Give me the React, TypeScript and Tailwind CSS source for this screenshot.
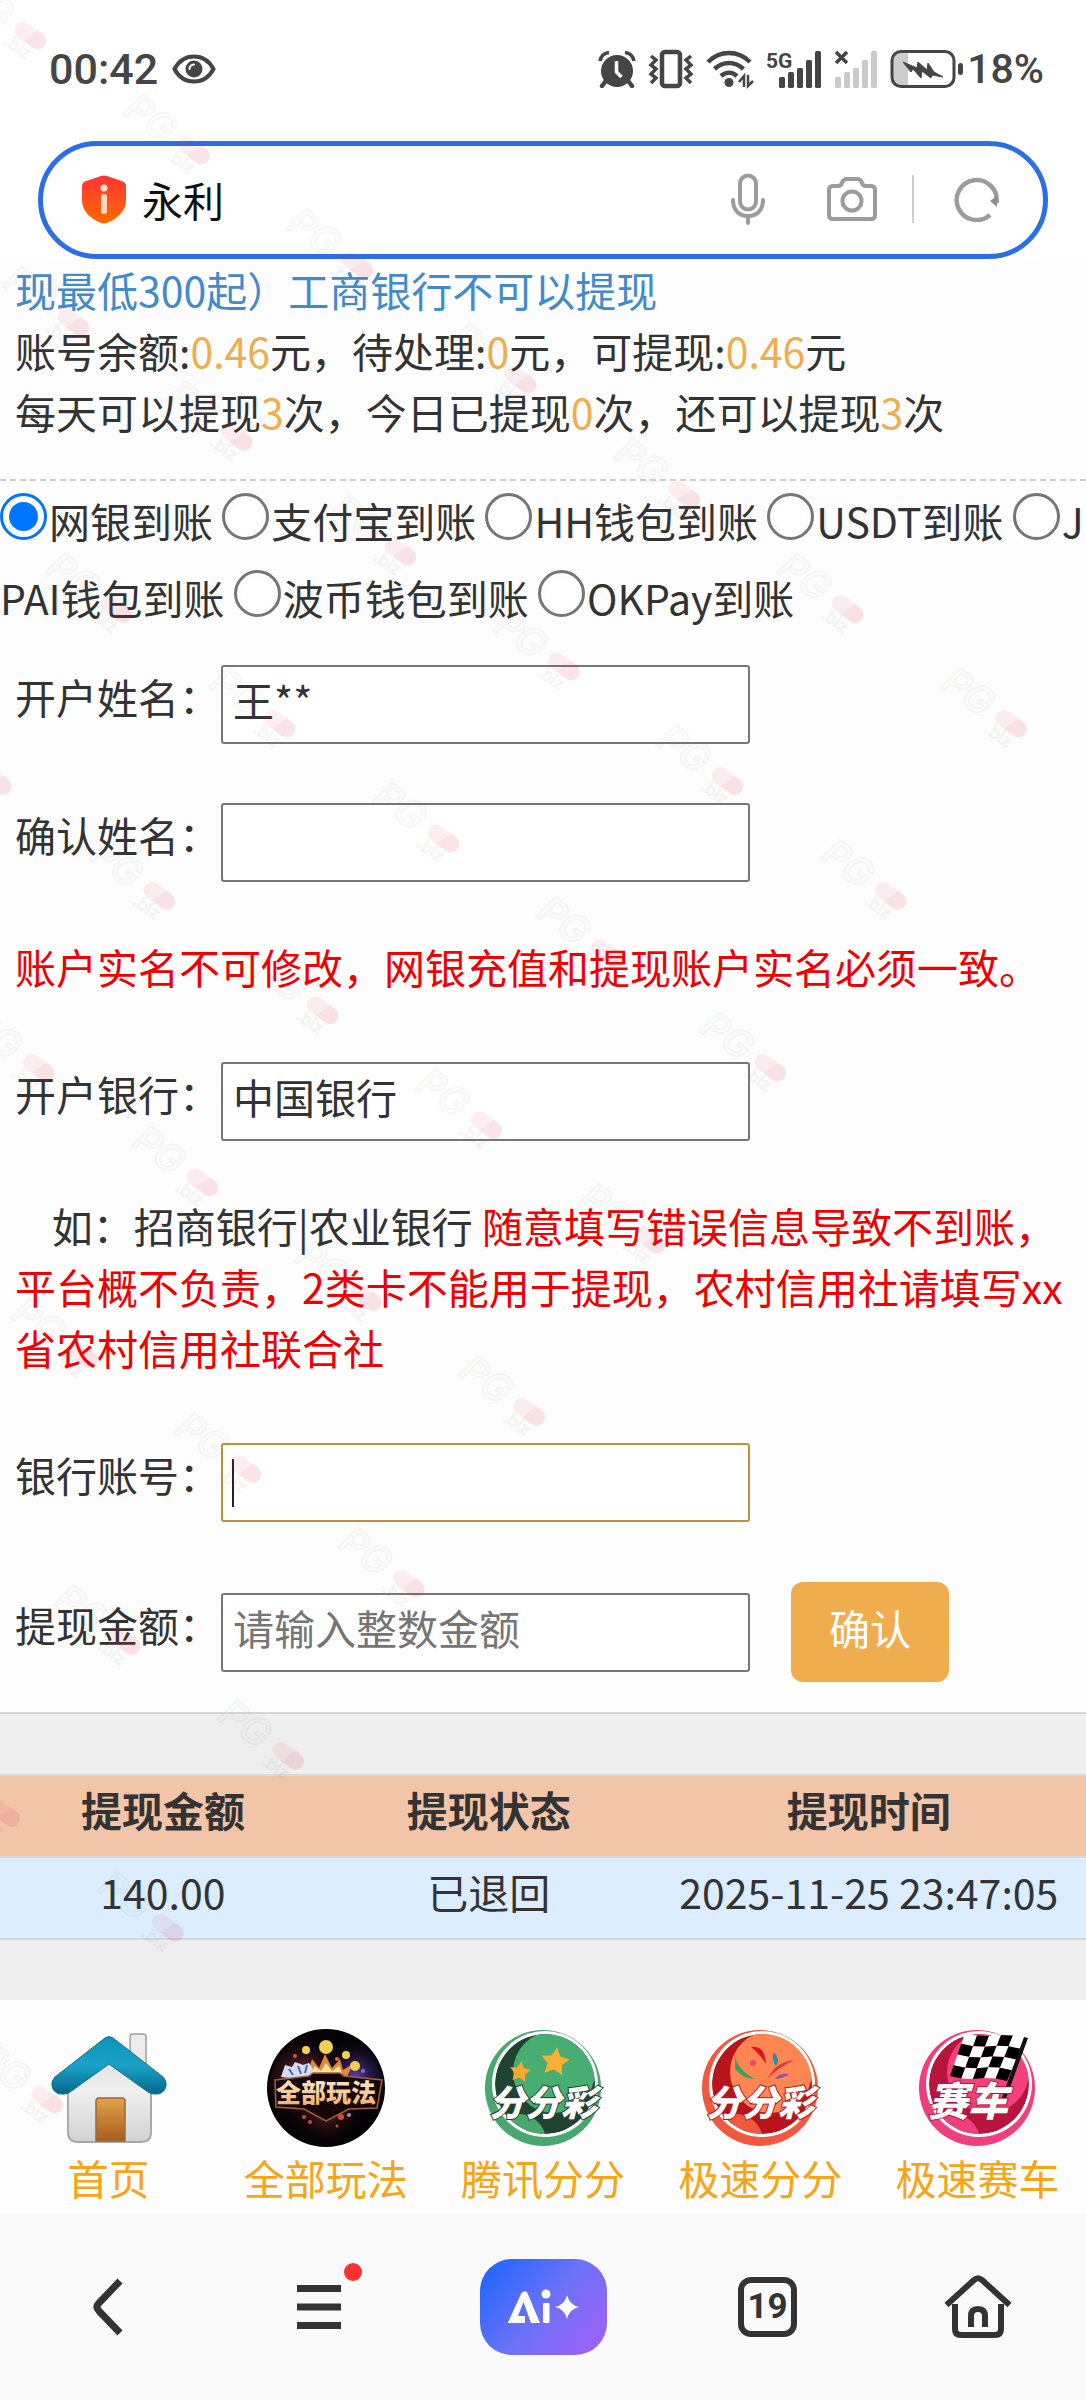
import React from "react";

const ORANGE = "text-[#f0ad4e]";

/* ---------- status bar icons ---------- */

function EyeIcon() {
  return (
    <svg width="44" height="32" viewBox="0 0 44 32" fill="none" aria-hidden="true">
      <path d="M2.500 16C7 7.500 14 3.500 22 3.500S37 7.500 41.500 16C37 24.500 30 28.500 22 28.500S7 24.500 2.500 16Z" stroke="#454545" strokeWidth="4" />
      <circle cx="22" cy="16" r="8.500" fill="#454545" />
      <path d="M17.500 16a4.500 4.500 0 0 1 4.500-4.500" stroke="#fff" strokeWidth="2" strokeLinecap="round" />
    </svg>
  );
}

function AlarmIcon() {
  return (
    <svg width="38" height="38" viewBox="0 0 38 38" fill="none" aria-hidden="true">
      <circle cx="19" cy="21" r="16" fill="#454545" />
      <path d="M2 11C3 6 6 3 11 2.500M36 11C35 6 32 3 27 2.500" stroke="#454545" strokeWidth="3.500" />
      <path d="M7 32l-3 4M31 32l3 4" stroke="#454545" strokeWidth="4.500" strokeLinecap="round" />
      <path d="M18.500 11v11l5 5" stroke="#fff" strokeWidth="3.500" />
    </svg>
  );
}

function VibrateIcon() {
  return (
    <svg width="46" height="40" viewBox="0 0 46 40" fill="none" stroke="#454545" aria-hidden="true">
      <rect x="14" y="3" width="18" height="34" rx="3" strokeWidth="4.500" />
      <path d="M3 7l5 4-5 5 5 4-5 5 5 4-5 5M43 7l-5 4 5 5-5 4 5 5-5 4 5 5" strokeWidth="3.500" />
    </svg>
  );
}

function WifiIcon() {
  return (
    <svg width="48" height="40" viewBox="0 0 48 40" fill="none" stroke="#454545" aria-hidden="true">
      <path d="M2 13C14 1 32 1 44 13" strokeWidth="4.500" />
      <path d="M8.500 20C17 12 29 12 37.500 20" strokeWidth="4.500" />
      <path d="M15 27c5-4.500 11-4.500 16 0" strokeWidth="4.500" />
      <circle cx="23" cy="33.500" r="4.500" fill="#454545" stroke="none" />
      <path d="M38 38V27l-5 6M42 26v11l5-5" strokeWidth="2.500" />
    </svg>
  );
}

function Bars({ x, color }: { x: number; color: string }) {
  return (
    <g fill={color}>
      {[11, 16, 20, 28, 37].map((h, i) => (
        <rect key={i} x={x + i * 9} y={39 - h} width="6" height={h} rx="1.500" />
      ))}
    </g>
  );
}

function SignalIcon() {
  return (
    <svg width="56" height="40" viewBox="0 0 56 40" aria-label="5G">
      <text x="0" y="19" fontFamily="Roboto, sans-serif" fontWeight="700" fontSize="21" fill="#454545">5G</text>
      <Bars x={13} color="#454545" />
    </svg>
  );
}

function NoSignalIcon() {
  return (
    <svg width="44" height="40" viewBox="0 0 44 40" fill="none" aria-hidden="true">
      <path d="M2 3l11 11M13 3L2 14" stroke="#454545" strokeWidth="3.500" />
      <Bars x={1} color="#cacaca" />
    </svg>
  );
}

function BatteryIcon() {
  return (
    <svg width="74" height="40" viewBox="0 0 74 40" fill="none" aria-hidden="true">
      <path d="M12 3h6v34h-6c-6 0-9-3-9-9V12c0-6 3-9 9-9Z" fill="#cdcdcd" />
      <rect x="2" y="2.500" width="62" height="35" rx="9" stroke="#454545" strokeWidth="3" />
      <rect x="68" y="14" width="5" height="12" rx="2.500" fill="#454545" />
      <path d="M13 13l14 6 1-6 9 8 1-7 6 9 9 5-11-2-1 3-9-7-1 7-8-9-2 3Z" fill="#454545" stroke="#454545" strokeWidth="1" />
    </svg>
  );
}

/* ---------- address bar icons ---------- */

function ShieldIcon() {
  return (
    <svg width="46" height="50" viewBox="0 0 46 50" aria-hidden="true">
      <defs>
        <linearGradient id="shield" x1="0" y1="0" x2="0" y2="1">
          <stop offset="0" stopColor="#ff3434" />
          <stop offset="1" stopColor="#ff6a00" />
        </linearGradient>
      </defs>
      <path d="M20 2q3-1 6 0l16 5.500q3 1.500 3 4.500v14c0 11-8 18-18 22.500q-4 2-8 0C9 44 1 37 1 26V12q0-3 3-4.500Z" fill="url(#shield)" />
      <circle cx="23" cy="14" r="3.500" fill="#ffe3d6" />
      <rect x="20" y="20" width="6" height="20" rx="2.500" fill="#ffd9c2" />
    </svg>
  );
}

function MicIcon() {
  return (
    <svg width="34" height="52" viewBox="0 0 34 52" fill="none" stroke="#9c9c9c" strokeWidth="4" strokeLinecap="round" aria-hidden="true">
      <rect x="9" y="2.500" width="16" height="34" rx="8" />
      <path d="M2 27c0 10 6 16 15 16s15-6 15-16M17 43v7" />
    </svg>
  );
}

function CameraIcon() {
  return (
    <svg width="50" height="44" viewBox="0 0 50 44" fill="none" stroke="#9c9c9c" strokeWidth="4" strokeLinejoin="round" aria-hidden="true">
      <path d="M6 9h5q3 0 4-3 1-4 5-4h10q4 0 5 4 1 3 4 3h5q4 0 4 4v25q0 4-4 4H6q-4 0-4-4V13q0-4 4-4Z" />
      <circle cx="25" cy="24" r="9.500" />
    </svg>
  );
}

function ReloadIcon() {
  return (
    <svg width="46" height="46" viewBox="0 0 46 46" fill="none" aria-hidden="true">
      <path d="M36 39A20 20 0 1 1 42.500 27" stroke="#9c9c9c" strokeWidth="4.500" />
      <path d="M36 25l7-5v11Z" fill="#8c8c8c" />
    </svg>
  );
}

/* ---------- lottery shortcuts ---------- */

function HouseArt() {
  return (
    <svg width="118" height="118" viewBox="0 0 118 118" aria-hidden="true">
      <defs>
        <linearGradient id="roof" x1="0" y1="0" x2="0" y2="1">
          <stop offset="0" stopColor="#0e93b8" />
          <stop offset=".5" stopColor="#1ba2c8" />
          <stop offset="1" stopColor="#04688a" />
        </linearGradient>
        <linearGradient id="wall" x1="0" y1="0" x2="0" y2="1">
          <stop offset="0" stopColor="#dedede" />
          <stop offset=".4" stopColor="#f0f0f0" />
          <stop offset="1" stopColor="#d2d2d2" />
        </linearGradient>
        <linearGradient id="door" x1="0" y1="0" x2="0" y2="1">
          <stop offset="0" stopColor="#e3a24c" />
          <stop offset="1" stopColor="#a75c1e" />
        </linearGradient>
      </defs>
      <path d="M80 36V8q0-3 3-3h10q3 0 3 3v40Z" fill="#ececec" stroke="#9f9f9f" strokeWidth="1.500" />
      <path d="M18 58L59 28l42 30v45q0 10-10 10H28q-10 0-10-10Z" fill="url(#wall)" stroke="#a9a9a9" strokeWidth="2" />
      <path d="M46 112V72q0-3 3-3h23q3 0 3 3v40Z" fill="url(#door)" stroke="#9b6a38" strokeWidth="1.500" />
      <path d="M55 9q4-3 8 0l50 39q4 4 3 9-2 9-12 8-3 0-6-2L59 35 20 63q-3 2-6 2Q4 66 2 57q-1-5 3-9Z" fill="url(#roof)" stroke="#0b6f8d" strokeWidth="1" />
    </svg>
  );
}

function AllGamesArt() {
  return (
    <svg width="118" height="118" viewBox="0 0 118 118" aria-hidden="true">
      <defs>
        <radialGradient id="glowL" cx=".3" cy=".42" r=".42">
          <stop offset="0" stopColor="#a23a4c" />
          <stop offset="1" stopColor="#000" stopOpacity="0" />
        </radialGradient>
        <radialGradient id="glowR" cx=".76" cy=".4" r=".36">
          <stop offset="0" stopColor="#5a41a8" />
          <stop offset="1" stopColor="#000" stopOpacity="0" />
        </radialGradient>
        <radialGradient id="glowB" cx=".5" cy=".68" r=".34">
          <stop offset="0" stopColor="#7a2a2c" />
          <stop offset="1" stopColor="#000" stopOpacity="0" />
        </radialGradient>
        <linearGradient id="gold" x1="0" y1="0" x2="0" y2="1">
          <stop offset="0" stopColor="#fff6dc" />
          <stop offset="1" stopColor="#f0a862" />
        </linearGradient>
      </defs>
      <circle cx="59" cy="59" r="59" fill="#050205" />
      <circle cx="59" cy="59" r="57" fill="url(#glowB)" />
      <circle cx="59" cy="59" r="57" fill="url(#glowL)" />
      <circle cx="59" cy="59" r="57" fill="url(#glowR)" />
      <path d="M38 46l-6-12 10 6 3-10 7 9 6-14 7 14 8-9 3 11 10-6-6 13Z" fill="#d98a3c" />
      <path d="M44 44l4-7 6 5 5-8 6 8 7-5 3 7Z" fill="#ffe39a" />
      <path d="M14 48l4-12 7 2 3-5 8 3 6-2 4 6-4 8-12 2Z" fill="#d6dcf3" />
      <path d="M22 40l4 6M31 37l3 8M40 36l-2 8" stroke="#4b6aa8" strokeWidth="2" />
      <g fill="#f5cf55">
        <circle cx="59" cy="18" r="7" />
        <circle cx="39" cy="21" r="4" />
        <circle cx="79" cy="26" r="4" />
        <circle cx="88" cy="37" r="5" />
        <circle cx="28" cy="27" r="2" fill="#d45a34" />
        <circle cx="70" cy="30" r="2" fill="#f06a3c" />
        <circle cx="96" cy="42" r="2" fill="#8c6ae0" />
      </g>
      <path d="M8 51l34-4 4-3h27l4 3 38 4-5 28-28 1-23 12-22-12-28-2Z" fill="#140608" stroke="#a0603c" strokeWidth="1.500" />
      <g fill="#c2503c">
        <circle cx="37" cy="88" r="2" />
        <circle cx="43" cy="93" r="2" />
        <circle cx="74" cy="88" r="3" />
        <circle cx="82" cy="86" r="2" fill="#d6789c" />
        <circle cx="70" cy="97" r="1.500" />
      </g>
      <text x="59" y="73" textAnchor="middle" fontFamily="'Noto Sans CJK SC', sans-serif" fontWeight="900" fontSize="25" fill="url(#gold)">全部玩法</text>
    </svg>
  );
}

function starPoints(cx: number, cy: number, r: number, turn: number) {
  return Array.from({ length: 10 }, (_, i) => {
    const a = ((i * 36 + turn - 90) * Math.PI) / 180;
    const q = i % 2 ? r * 0.5 : r;
    return `${cx + q * Math.cos(a)},${cy + q * Math.sin(a)}`;
  }).join(" ");
}

type BallProps = {
  id: string;
  rim: string;
  dark: string;
  light: string;
  title: string;
  children: React.ReactNode;
  size: number;
  x: number;
};

function BallArt({ id, rim, dark, light, title, children, size, x }: BallProps) {
  return (
    <svg width="118" height="118" viewBox="0 0 118 118" className="overflow-visible" aria-hidden="true">
      <clipPath id={id}>
        <circle cx="61" cy="55" r="50" />
      </clipPath>
      <circle cx="59" cy="59" r="58" fill={rim} />
      <circle cx="61" cy="55" r="53" fill="#fff" />
      <g clipPath={`url(#${id})`}>
        <circle cx="61" cy="55" r="50" fill={dark} />
        <circle cx="70" cy="43" r="41" fill={light} />
        <circle cx="35" cy="112" r="27" fill={rim} />
      </g>
      {children}
      <text x={x} y="87" fontFamily="'Noto Sans CJK SC', sans-serif" fontWeight="900" fontStyle="italic" fontSize={size}>
        <tspan fill="#fff" stroke={dark} strokeWidth="2" paintOrder="stroke">
          {title}
        </tspan>
      </text>
    </svg>
  );
}

function TencentArt() {
  return (
    <BallArt id="ball-green" rim="#47a76c" dark="#1f4330" light="#47ad70" title="分分彩" size={36} x={5}>
      <polygon points={starPoints(71, 33, 15, 8)} fill="#fbb034" />
      <polygon points={starPoints(36, 43, 11, 8)} fill="#fba82c" />
    </BallArt>
  );
}

function SpeedArt() {
  return (
    <BallArt id="ball-red" rim="#f0583f" dark="#b8141c" light="#ff8552" title="分分彩" size={36} x={5}>
      <path d="M50 18q14-2 15 17Q58 24 50 18Z" fill="#e0141e" />
      <path d="M73 23q7 8 2 14-5-7-2-14Z" fill="#2390a8" />
      <path d="M34 28q4 14 20 22-12 0-20-10Z" fill="#3da35c" />
      <path d="M93 31q-18 2-26 18 10-10 26-18Z" fill="#d9363e" />
      <path d="M88 45q-10-1-14 5 8 0 14-5Z" fill="#8a5aa0" />
      <circle cx="52" cy="34" r="3" fill="#e8486c" />
    </BallArt>
  );
}

function flagPoint(u: number, v: number) {
  const x = 47 + 60 * u - 15 * v - 3 * u * v;
  const y = 4 + 5 * u + 43 * v + Math.sin(u * Math.PI * 2) * 1.5;
  return `${x},${y}`;
}

function RacingArt() {
  const cells = [];
  for (let r = 0; r < 4; r++) {
    for (let c = 0; c < 5; c++) {
      const points = [
        flagPoint(c / 5, r / 4),
        flagPoint((c + 1) / 5, r / 4),
        flagPoint((c + 1) / 5, (r + 1) / 4),
        flagPoint(c / 5, (r + 1) / 4),
      ].join(" ");
      cells.push(<polygon key={`${r}-${c}`} points={points} fill={(r + c) % 2 ? "#000" : "#fff"} />);
    }
  }
  return (
    <BallArt id="ball-pink" rim="#ef3f7c" dark="#b8153c" light="#f4407c" title="赛车" size={40} x={10}>
      {cells}
      <path d="M106 8l4 1-24 66-4-1Z" fill="#111" />
    </BallArt>
  );
}

/* ---------- watermark ---------- */

function Watermark() {
  const marks: { x: number; y: number }[] = [];
  for (let row = 0; row <= 8; row++) {
    for (let i = 0; i <= 6 + row; i++) {
      const x = 30 + i * 163.5 - row * 284;
      const y = 36 + i * 114.7 + row * 57.3;
      if (x > -40 && x < 1140) marks.push({ x, y });
    }
  }
  return (
    <svg className="pointer-events-none absolute inset-0 h-full w-full" aria-hidden="true">
      {marks.map((m, i) => (
        <g key={i} transform={`translate(${m.x} ${m.y}) rotate(36)`} fontFamily="Inter, sans-serif">
          <text x="-80" y="12" fontSize="38" fontStyle="italic" fontWeight="500" fill="none" stroke="#777" strokeOpacity=".08" strokeWidth="2">PG</text>
          <path d="M-9-9H3L-3 8h-6a8 8 0 0 1 0-17Z" fill="#e8304a" fillOpacity=".08" />
          <path d="M3-9h6a8 8 0 0 1 0 17H-3Z" fill="#d8304a" fillOpacity=".13" />
          <text x="-18" y="22" fontSize="17" fill="none" stroke="#777" strokeOpacity=".1">.biz</text>
        </g>
      ))}
    </svg>
  );
}

/* ---------- page parts ---------- */

function StatusBar() {
  return (
    <div className="flex h-[141px] items-center justify-between pr-[42px] pb-[3px] pl-[49px] font-['Roboto',sans-serif] text-[43px] font-medium text-[#454545]">
      <div className="flex items-center gap-[14px]">
        <span>00:42</span>
        <EyeIcon />
      </div>
      <div className="flex items-center gap-[12px]">
        <AlarmIcon />
        <VibrateIcon />
        <WifiIcon />
        <SignalIcon />
        <NoSignalIcon />
        <div className="flex items-center gap-[3px]">
          <BatteryIcon />
          <span className="text-[41px]">18%</span>
        </div>
      </div>
    </div>
  );
}

function AddressBar() {
  return (
    <div className="mx-[38px] flex h-[118px] items-center rounded-full border-[5px] border-[#2b6fe6] bg-white pr-[43px] pb-[2px] pl-[38px]">
      <ShieldIcon />
      <input
        aria-label="搜索或输入网址"
        defaultValue="永利"
        className="ml-[15px] min-w-0 flex-1 bg-transparent text-[41px] text-[#111] outline-none"
      />
      <button type="button" aria-label="语音搜索">
        <MicIcon />
      </button>
      <button type="button" aria-label="拍照搜索" className="ml-[62px]">
        <CameraIcon />
      </button>
      <span className="mx-[35px] h-[48px] w-[2px] bg-[#cfcfcf]" />
      <button type="button" aria-label="刷新" className="ml-[5px]">
        <ReloadIcon />
      </button>
    </div>
  );
}

const methods = ["网银到账", "支付宝到账", "HH钱包到账", "USDT到账", "JPAI钱包到账", "波币钱包到账", "OKPay到账"];

function Methods() {
  return (
    <fieldset className="pt-px leading-[77px] break-all">
      {methods.map((name, i) => (
        <React.Fragment key={name}>
          <label>
            <input
              type="radio"
              name="method"
              defaultChecked={i === 0}
              className="mr-[2px] inline-block size-[47px] appearance-none rounded-full border-[3px] border-[#767676] bg-white bg-clip-content p-[6px] align-[-2px] checked:border-[#0075ff] checked:bg-[#0075ff]"
            />
            {name}
          </label>{" "}
        </React.Fragment>
      ))}
    </fieldset>
  );
}

type FieldProps = {
  id: string;
  label: string;
  value?: string;
  placeholder?: string;
  focused?: boolean;
  children?: React.ReactNode;
};

function Field({ id, label, value, placeholder, focused, children }: FieldProps) {
  return (
    <div className="flex items-center">
      <label htmlFor={id} className="w-[206px] shrink-0 pb-[16px]">
        {label}
      </label>
      <div className="relative w-[529px]">
        <input
          id={id}
          defaultValue={value}
          placeholder={placeholder}
          className={
            "block h-[79px] w-full rounded-[3px] border-2 bg-white px-[10px] pb-[11px] outline-none placeholder:text-[#757575] placeholder:opacity-100 " +
            (focused ? "border-[#c0913a]" : "border-[#767676]")
          }
        />
        {focused && <span className="absolute top-[16px] left-[11px] h-[48px] w-[2px] bg-[#222]" />}
      </div>
      {children}
    </div>
  );
}

function Nav() {
  const items = [
    { name: "首页", art: <HouseArt /> },
    { name: "全部玩法", art: <AllGamesArt /> },
    { name: "腾讯分分", art: <TencentArt /> },
    { name: "极速分分", art: <SpeedArt /> },
    { name: "极速赛车", art: <RacingArt /> },
  ];
  return (
    <nav className="grid grid-cols-5 bg-[#fdfdfd] pt-[29px]">
      {items.map((item) => (
        <a key={item.name} href="#" className="flex flex-col items-center pb-[5px] text-[#f7a416]">
          {item.art}
          <span>{item.name}</span>
        </a>
      ))}
    </nav>
  );
}

function BrowserBar() {
  return (
    <footer className="grid h-[187px] grid-cols-[216fr_205fr_244fr_205fr_216fr] place-items-center bg-[#fafafa]">
      <button type="button" aria-label="返回">
        <svg width="30" height="58" viewBox="0 0 30 58" fill="none" stroke="#333" strokeWidth="7">
          <path d="M27 3L6 25q-4 4 0 8l21 22" />
        </svg>
      </button>
      <button type="button" aria-label="菜单" className="relative">
        <svg width="44" height="46" viewBox="0 0 44 46" fill="#333">
          <rect y="1" width="44" height="7" />
          <rect y="19.500" width="44" height="7" />
          <rect y="38" width="44" height="7" />
        </svg>
        <span className="absolute -top-[21px] -right-[21px] size-[18px] rounded-full bg-[#f93232]" />
      </button>
      <button
        type="button"
        aria-label="AI 助手"
        className="flex h-[96px] w-[127px] items-center justify-center rounded-[32px] bg-[linear-gradient(130deg,#1f66ff_5%,#6b72f8_50%,#a060f6_95%)]"
      >
        <svg width="74" height="36" viewBox="0 0 74 36" fill="#fff" aria-hidden="true">
          <path d="M2 33.500L15 5q2-4 6-2l13 31H25L17.500 13 12 27h7v7H3q-1 0-1-.5Z" />
          <circle cx="40" cy="5" r="4.500" />
          <rect x="37" y="14" width="6.500" height="20" rx="1" />
          <path d="M61 6q2.500 10 12 12-9.500 2-12 12-2.500-10-12-12 9.500-2 12-12Z" />
        </svg>
      </button>
      <button
        type="button"
        aria-label="19 个标签页"
        className="flex h-[60px] w-[59px] items-center justify-center rounded-[13px] border-[6px] border-[#333] font-['Roboto',sans-serif] text-[35px] leading-none font-bold text-[#333]"
      >
        19
      </button>
      <button type="button" aria-label="主页">
        <svg width="68" height="64" viewBox="0 0 68 64" fill="none" stroke="#333" strokeWidth="6">
          <path d="M2.500 30L30 5q4-3.500 8 0l27.500 25" />
          <path d="M11 29v25q0 6 6 6h34q6 0 6-6V29" />
          <path d="M27 52V41q0-7 7-7t7 7v11" />
        </svg>
      </button>
    </footer>
  );
}

export default function App() {
  return (
    <div className="relative min-h-screen w-full overflow-hidden bg-white font-['Noto_Sans_CJK_SC',sans-serif] text-[41px] leading-[61px] text-[#333]">
      <StatusBar />
      <AddressBar />

      <main className="bg-[#fdfdfd]">
        <section className="border-b-2 border-dashed border-[#ccc] px-[15px] pb-[37px]">
          <p className="text-[#428bca]">现最低300起）工商银行不可以提现</p>
          <p>
            账号余额:<span className={ORANGE}>0.46</span>元，待处理:<span className={ORANGE}>0</span>元，可提现:
            <span className={ORANGE}>0.46</span>元
          </p>
          <p>
            每天可以提现<span className={ORANGE}>3</span>次，今日已提现<span className={ORANGE}>0</span>次，还可以提现
            <span className={ORANGE}>3</span>次
          </p>
        </section>

        <form onSubmit={(e) => e.preventDefault()}>
          <Methods />
          <div className="px-[15px] pt-[29px] pb-[30px]">
            <Field id="owner" label="开户姓名：" value="王**" />
            <div className="mt-[59px]">
              <Field id="owner-confirm" label="确认姓名：" />
            </div>
            <p className="mt-[54px] text-[#f00000]">账户实名不可修改，网银充值和提现账户实名必须一致。</p>
            <div className="mt-[65px]">
              <Field id="bank" label="开户银行：" value="中国银行" />
            </div>
            <p className="mt-[54px] break-all">
              {"\u00a0\u00a0\u00a0\u00a0"}如：招商银行|农业银行{" "}
              <span className="text-[#f00000]">
                随意填写错误信息导致不到账，平台概不负责，2类卡不能用于提现，农村信用社请填写xx省农村信用社联合社
              </span>
            </p>
            <div className="mt-[65px] mb-[60px]">
              <Field id="account" label="银行账号：" focused />
            </div>
            <Field id="amount" label="提现金额：" placeholder="请输入整数金额">
              <button type="submit" className="ml-[41px] h-[100px] w-[158px] rounded-[12px] bg-[#f0ad4e] pb-[10px] text-white">
                确认
              </button>
            </Field>
          </div>
        </form>
      </main>

      <section className="border-t-2 border-[#d6d6d6] bg-[#eee] pt-[60px] pb-[60px]">
        <table className="w-full table-fixed border-collapse text-center">
          <colgroup>
            <col className="w-[30%]" />
            <col className="w-[30%]" />
            <col className="w-[40%]" />
          </colgroup>
          <thead>
            <tr className="border-y-2 border-[#dadada] bg-[#f2c4a8]">
              <th className="pt-[3px] pb-[16px] font-bold">提现金额</th>
              <th className="pt-[3px] pb-[16px] font-bold">提现状态</th>
              <th className="pt-[3px] pb-[16px] font-bold">提现时间</th>
            </tr>
          </thead>
          <tbody>
            <tr className="border-b-2 border-[#d6d6d6] bg-[#dcedff]">
              <td className="pt-[3px] pb-[16px]">140.00</td>
              <td className="pt-[3px] pb-[16px]">已退回</td>
              <td className="pt-[3px] pb-[16px] whitespace-nowrap">2025-11-25 23:47:05</td>
            </tr>
          </tbody>
        </table>
      </section>

      <Nav />
      <BrowserBar />
      <Watermark />
    </div>
  );
}
